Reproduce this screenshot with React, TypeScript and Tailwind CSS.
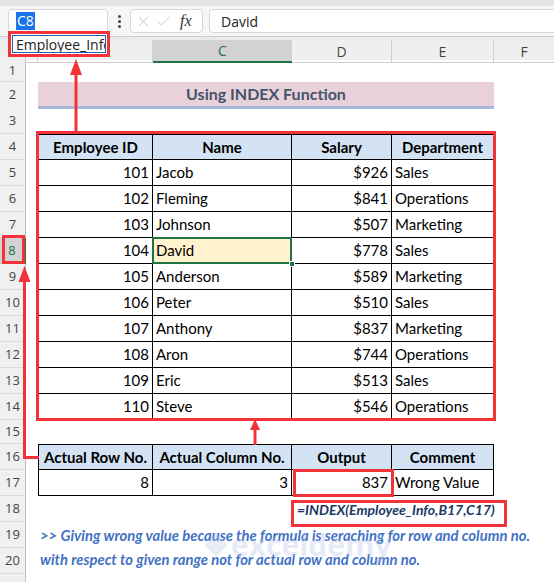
import { X, Check } from 'lucide-react';

const cols = 'grid grid-cols-[26px_12px_115px_139px_100px_102px_60px]';

const employees = [
    { id: 101, name: 'Jacob', salary: '$926', dept: 'Sales' },
    { id: 102, name: 'Fleming', salary: '$841', dept: 'Operations' },
    { id: 103, name: 'Johnson', salary: '$507', dept: 'Marketing' },
    { id: 104, name: 'David', salary: '$778', dept: 'Sales' },
    { id: 105, name: 'Anderson', salary: '$589', dept: 'Marketing' },
    { id: 106, name: 'Peter', salary: '$510', dept: 'Sales' },
    { id: 107, name: 'Anthony', salary: '$837', dept: 'Marketing' },
    { id: 108, name: 'Aron', salary: '$744', dept: 'Operations' },
    { id: 109, name: 'Eric', salary: '$513', dept: 'Sales' },
    { id: 110, name: 'Steve', salary: '$546', dept: 'Operations' },
];

function RowHead({ n, active }: { n?: number; active?: boolean }) {
    return (
        <div
            className={
                active
                    ? 'flex items-center justify-center bg-[#d2d2d2] text-[#217346] text-[13px] border-b border-[#c6c6c6] border-r-2 border-r-[#217346] font-["Open_Sans",sans-serif]'
                    : 'flex items-center justify-center bg-[#f0f0f0] text-[#444] text-[13px] border-b border-[#dadada] border-r border-r-[#bcbcbc] font-["Open_Sans",sans-serif]'
            }
        >
            {n}
        </div>
    );
}

const th = 'flex items-center justify-center font-bold bg-[#d3e3f3] border-r border-b border-t border-black';
const td = 'flex items-center border-r border-b border-black px-[3px]';

export default function App() {
    return (
        <div className="relative w-[554px] h-[582px] overflow-hidden bg-white">
            {/* Formula bar */}
            <div className="h-[6px] bg-[#e3e3e3]" />
            <div className="h-[30px] bg-[#f6f6f6] flex items-start pt-[3px] pl-[8px] gap-[6px] font-['Open_Sans',sans-serif]">
                <div className="w-[100px] h-[24px] bg-white border border-[#d6d6d6] rounded-[4px] flex items-center pl-[7px]">
                    <span className="bg-[#1a73e8] text-white text-[14px] leading-[18px] px-[1px]">C8</span>
                </div>
                <div className="w-[10px] h-[24px] flex flex-col items-center justify-center gap-[2px]">
                    <span className="w-[3px] h-[3px] bg-[#444] rounded-full" />
                    <span className="w-[3px] h-[3px] bg-[#444] rounded-full" />
                    <span className="w-[3px] h-[3px] bg-[#444] rounded-full" />
                </div>
                <div className="w-[73px] h-[24px] bg-white border border-[#d6d6d6] rounded-[4px] flex items-center pl-[4px] gap-[3px] text-[#bdbdbd]">
                    <X size={17} strokeWidth={1.2} />
                    <Check size={17} strokeWidth={1.2} />
                    <span className="ml-[5px] text-[#333] italic text-[16px] font-['Liberation_Serif',serif]">fx</span>
                </div>
                <div className="flex-1 h-[24px] bg-white border border-r-0 border-[#d6d6d6] rounded-l-[4px] flex items-center pl-[11px] text-[14px] text-[#222]">
                    David
                </div>
            </div>
            <div className="h-[4px] bg-[#e7eaee] border-t border-[#cfcfcf]" />

            {/* Column headers (A and B sit under the name box list) */}
            <div className={`${cols} h-[20px] text-[14px] text-[#444] font-['Open_Sans',sans-serif] bg-[#efefef]`}>
                <div className="border-r border-b border-[#cfcfcf]" />
                <div className="border-r border-b border-[#cfcfcf]" />
                <div className="border-r border-b border-[#cfcfcf]" />
                <div className="flex items-center justify-center bg-[#d2d2d2] text-[#217346] border-b-2 border-[#217346]">C</div>
                <div className="flex items-center justify-center border-r border-b border-[#cfcfcf]">D</div>
                <div className="flex items-center justify-center border-r border-b border-[#cfcfcf]">E</div>
                <div className="flex items-center justify-center border-b border-[#cfcfcf]">F</div>
            </div>

            {/* Sheet */}
            <div className="font-[Lato,sans-serif] text-[15px] text-black">
                <div className={`${cols} h-[22px]`}>
                    <RowHead n={1} />
                </div>
                <div className={`${cols} h-[26px]`}>
                    <RowHead n={2} />
                    <div />
                    <div className="col-span-4 flex items-center justify-center bg-[#e9d1da] border-b-[3px] border-[#a9b9dd] font-bold text-[#44546a] text-[16px]">
                        Using INDEX Function
                    </div>
                </div>
                <div className={`${cols} h-[26px]`}>
                    <RowHead n={3} />
                </div>
                <div className={`${cols} h-[26px]`}>
                    <RowHead n={4} />
                    <div />
                    <div className={`${th} border-l`}>Employee ID</div>
                    <div className={th}>Name</div>
                    <div className={th}>Salary</div>
                    <div className={th}>Department</div>
                </div>
                {employees.map((e, i) => (
                    <div key={e.id} className={`${cols} h-[26px]`}>
                        <RowHead n={i + 5} active={i === 3} />
                        <div />
                        <div className={`${td} justify-end border-l`}>{e.id}</div>
                        {i === 3 ? (
                            <div className={`${td} relative bg-[#fff2cc]`}>
                                {e.name}
                                <span className="absolute -top-px -left-px -right-px -bottom-px border-2 border-[#217346]" />
                                <span className="absolute -right-[4px] -bottom-[4px] w-[6px] h-[6px] bg-[#217346] border border-white" />
                            </div>
                        ) : (
                            <div className={td}>{e.name}</div>
                        )}
                        <div className={`${td} justify-end`}>{e.salary}</div>
                        <div className={td}>{e.dept}</div>
                    </div>
                ))}
                <div className={`${cols} h-[24px]`}>
                    <RowHead n={15} />
                </div>
                <div className={`${cols} h-[26px]`}>
                    <RowHead n={16} />
                    <div />
                    <div className={`${th} border-l`}>Actual Row No.</div>
                    <div className={th}>Actual Column No.</div>
                    <div className={th}>Output</div>
                    <div className={th}>Comment</div>
                </div>
                <div className={`${cols} h-[26px]`}>
                    <RowHead n={17} />
                    <div />
                    <div className={`${td} justify-end border-l`}>8</div>
                    <div className={`${td} justify-end`}>3</div>
                    <div className={`${td} justify-end`}>837</div>
                    <div className={td}>Wrong Value</div>
                </div>
                <div className={`${cols} h-[26px]`}>
                    <RowHead n={18} />
                    <div />
                    <div />
                    <div />
                    <div className="col-span-3 flex items-center pl-[5px] font-bold italic text-[14px] text-[#203864]">
                        =INDEX(Employee_Info,B17,C17)
                    </div>
                </div>
                <div className={`${cols} h-[26px]`}>
                    <RowHead n={19} />
                    <div />
                    <div className="col-span-5 flex items-center pl-[2px] font-bold italic text-[14.8px] text-[#4472c4] whitespace-nowrap">
                        &gt;&gt; Giving wrong value because the formula is seraching for row and column no.
                    </div>
                </div>
                <div className={`${cols} h-[26px]`}>
                    <RowHead n={20} />
                    <div />
                    <div className="col-span-5 flex items-start pl-[2px] font-bold italic text-[14.8px] text-[#4472c4] whitespace-nowrap">
                        with respect to given range not for actual row and column no.
                    </div>
                </div>
                <div className={`${cols} h-[26px]`}>
                    <RowHead />
                </div>
            </div>

            {/* Name box dropdown */}
            <div className="absolute left-[8px] top-[31px] w-[102px] h-[26px] border-[3px] border-[#f2333a] bg-white p-[1px]">
                <div className="h-full border border-[#1565c0] overflow-hidden whitespace-nowrap pl-[3px] text-[14px] leading-[18px] text-[#222] font-['Open_Sans',sans-serif]">
                    Employee_Info
                </div>
            </div>

            {/* Watermark */}
            <div className="absolute left-[205px] top-[530px] flex items-center gap-[4px] opacity-30 pointer-events-none">
                <div className="w-[22px] h-[22px] bg-[#b7c3e6] rotate-45 scale-75" />
                <span className="text-[30px] font-bold text-[#aebde6] font-['Open_Sans',sans-serif] leading-none">exceldemy</span>
            </div>

            {/* Annotations */}
            <svg className="absolute inset-0 pointer-events-none" width="554" height="582">
                <g fill="none" stroke="#f2333a" strokeWidth="3">
                    <rect x="37.5" y="132.5" width="457" height="287" />
                    <rect x="3.5" y="236.5" width="20" height="26" />
                    <rect x="294.5" y="470.5" width="98" height="25" />
                    <rect x="292.5" y="501.5" width="213" height="24" />
                    <line x1="76" y1="72" x2="76" y2="131" />
                    <polyline points="24.5,278 24.5,457.5 39,457.5" />
                    <line x1="255" y1="426" x2="255" y2="445" />
                </g>
                <g fill="#f2333a">
                    <polygon points="76,59 70,75 82,75" />
                    <polygon points="24.5,266 18.5,282 30.5,282" />
                    <polygon points="255,419 250,430 260,430" />
                </g>
            </svg>
        </div>
    );
}
